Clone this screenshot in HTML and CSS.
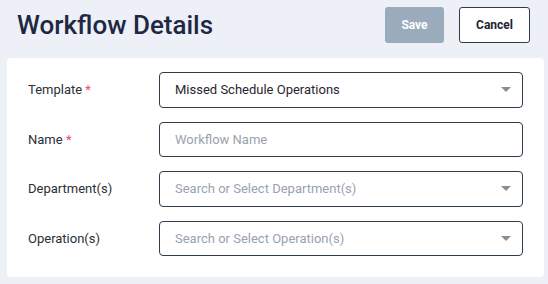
FILE: index.html
```html
<!DOCTYPE html>
<html lang="en">
<head>
  <meta charset="UTF-8" />
  <title>Workflow Details</title>
  <link rel="stylesheet" href="styles.css">
</head>
<body>
  <div class="page">
    <!-- Header -->
    <div class="header">
      <h1 class="title">Workflow Details</h1>
      <div class="actions">
        <button class="btn btn-save" disabled>Save</button>
        <button class="btn btn-cancel">Cancel</button>
      </div>
    </div>

    <!-- Form -->
    <div class="card">
      <div class="row">
        <label class="label">Template <span class="req">*</span></label>
        <div class="field select">
          <span class="value">Missed Schedule Operations</span>
          <span class="caret"></span>
        </div>
      </div>
      <div class="row">
        <label class="label">Name <span class="req">*</span></label>
        <div class="field">
          <span class="placeholder">Workflow Name</span>
        </div>
      </div>
      <div class="row">
        <label class="label">Department(s)</label>
        <div class="field select">
          <span class="placeholder">Search or Select Department(s)</span>
          <span class="caret"></span>
        </div>
      </div>
      <div class="row">
        <label class="label">Operation(s)</label>
        <div class="field select">
          <span class="placeholder">Search or Select Operation(s)</span>
          <span class="caret"></span>
        </div>
      </div>
    </div>
  </div>
</body>
</html>
```

FILE: styles.css
```css
* { box-sizing: border-box; }
body {
  margin: 0;
  font-family: Roboto, 'Liberation Sans', sans-serif;
  background: #edf0f7;
  color: #2b2f36;
}
.page {
  width: 548px;
  height: 284px;
  padding: 7px 4px 0 7px;
}
.header {
  display: flex;
  justify-content: space-between;
  align-items: center;
  height: 36px;
  margin-bottom: 15px;
}
.title {
  margin: 0 0 0 10px;
  font-size: 26px;
  font-weight: 500;
  color: #1e2843;
}
.actions {
  display: flex;
  gap: 15px;
  margin-right: 14px;
}
.btn {
  height: 36px;
  border-radius: 3px;
  font-family: Roboto, 'Liberation Sans', sans-serif;
  font-size: 12px;
  font-weight: 700;
  cursor: pointer;
}
.btn-save {
  width: 59px;
  background: #9aacbb;
  border: none;
  color: #fff;
}
.btn-cancel {
  width: 71px;
  background: #fff;
  border: 1px solid #2f3d4a;
  color: #1e2530;
}
.card {
  background: #fff;
  border-radius: 4px;
  padding: 14px 21px 21px 21px;
  display: flex;
  flex-direction: column;
  gap: 14px;
}
.row {
  display: flex;
  align-items: center;
}
.label {
  width: 131px;
  font-size: 13px;
  color: #2b2f36;
}
.req { color: #f0476a; }
.field {
  flex: 1;
  height: 35.5px;
  border: 1px solid #2f3e4c;
  border-radius: 4px;
  display: flex;
  align-items: center;
  padding: 0 11px 0 15px;
  font-size: 13px;
}
.value { color: #2a2530; }
.placeholder { color: #9aa2ad; }
.select { justify-content: space-between; }
.caret {
  width: 0;
  height: 0;
  border-left: 5px solid transparent;
  border-right: 5px solid transparent;
  border-top: 5px solid #8a8d92;
}
```
